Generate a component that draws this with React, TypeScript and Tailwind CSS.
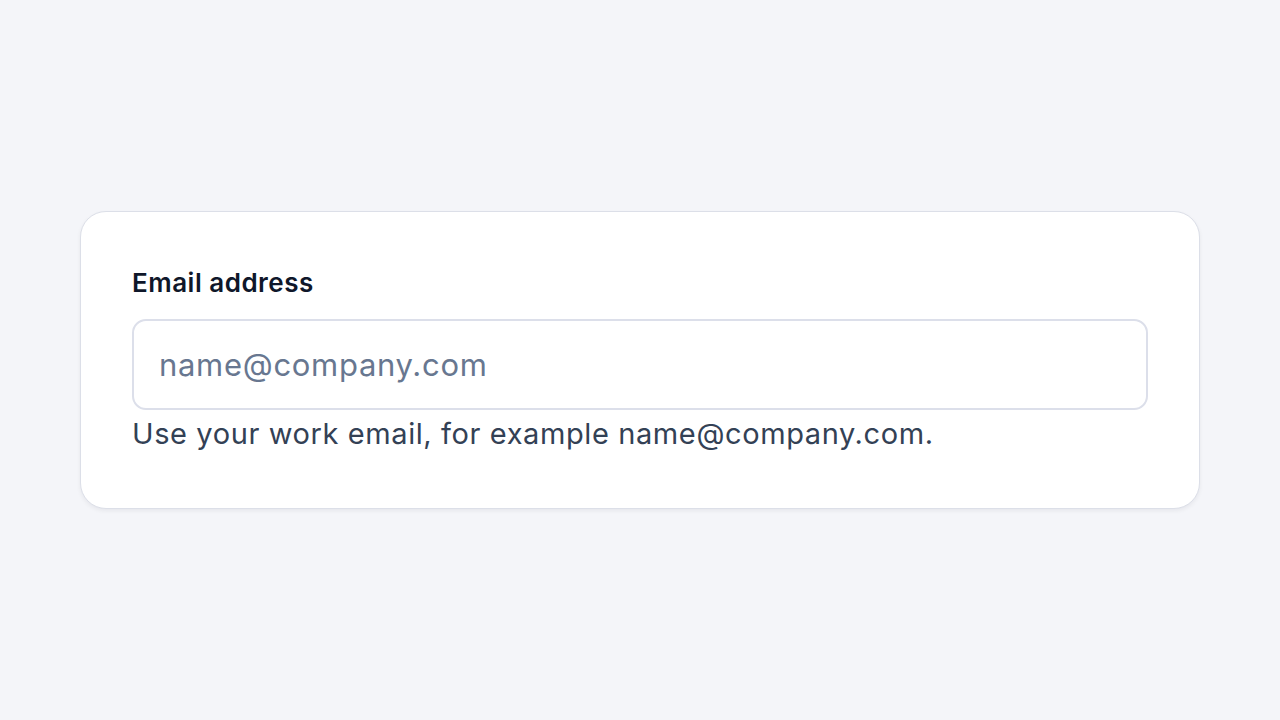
export default function App() {
  return (
    <div
      className="min-h-screen w-full bg-[#f4f5f9] flex items-center px-20"
      style={{ fontFamily: "Inter, 'Noto Sans', sans-serif" }}
    >
      <div className="w-full rounded-[26px] border border-[#dcdfe8] bg-white px-[51px] pt-[54px] pb-[54px] shadow-[0_2px_4px_rgba(15,23,42,0.06)]">
        <label
          htmlFor="email"
          className="block text-[26px] leading-[34px] font-semibold text-[#0f172a] tracking-[0.5px]"
        >
          Email address
        </label>
        <input
          id="email"
          type="email"
          placeholder="name@company.com"
          className="mt-[19px] block w-full h-[91px] rounded-[14px] border-2 border-[#dcdfea] bg-white px-[25px] text-[31px] tracking-[0.7px] text-[#0f172a] placeholder:text-[#687790] outline-none"
        />
        <p className="mt-[4px] text-[29px] leading-[40px] tracking-[0.6px] text-[#334155]">
          Use your work email, for example name@company.com.
        </p>
      </div>
    </div>
  );
}
